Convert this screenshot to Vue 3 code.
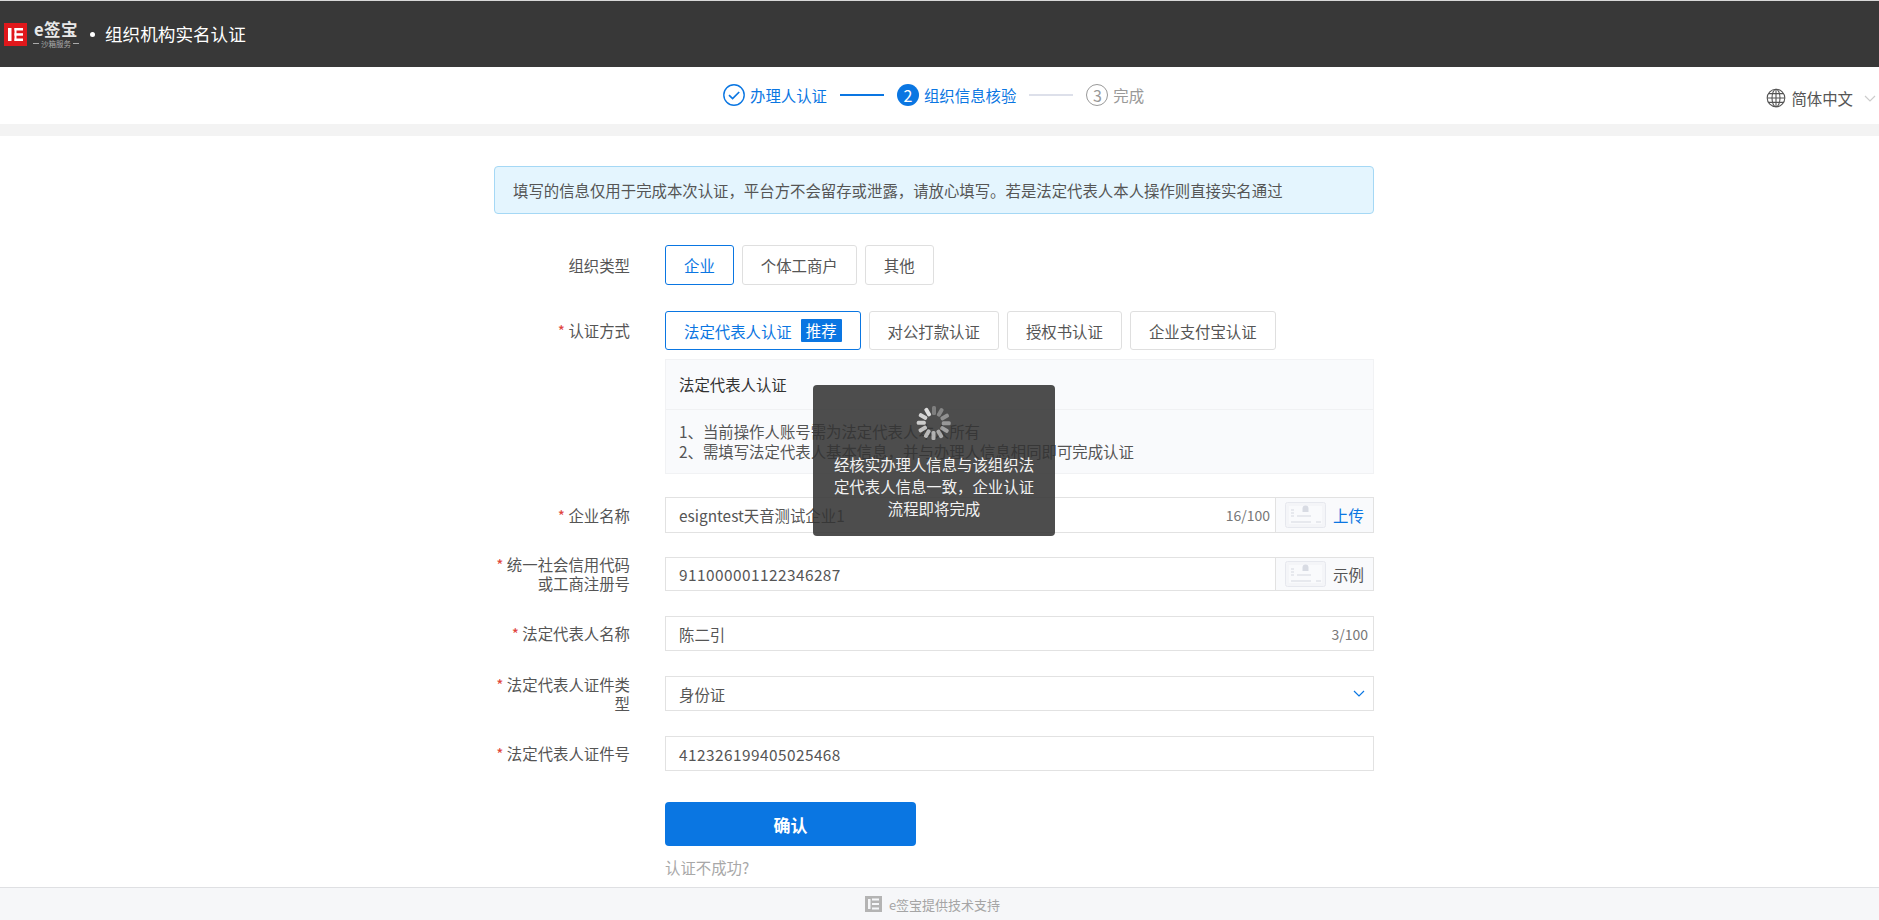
<script setup>
const orgTypes = [
  { label: '企业', active: true },
  { label: '个体工商户' },
  { label: '其他' },
]
const methods = [
  { label: '对公打款认证' },
  { label: '授权书认证' },
  { label: '企业支付宝认证' },
]
const spokes = Array.from({ length: 12 }, (_, i) => i)
</script>

<template>
  <div class="page">
    <header class="top">
      <div class="logo">
        <svg class="logo-mark" viewBox="0 0 23 23" width="23" height="23">
          <rect width="23" height="23" fill="#e0181c" />
          <rect x="4" y="5" width="3.5" height="13" fill="#fff" />
          <rect x="10.5" y="5" width="2" height="13" fill="#fff" />
          <rect x="10.5" y="5" width="8.5" height="2.5" fill="#fff" />
          <rect x="10.5" y="10.2" width="8.5" height="2.5" fill="#fff" />
          <rect x="10.5" y="15.5" width="8.5" height="2.5" fill="#fff" />
        </svg>
        <div class="logo-text">
          <div class="logo-name">e签宝</div>
          <div class="logo-sub"><i></i><span>沙箱服务</span><i></i></div>
        </div>
      </div>
      <span class="dot"></span>
      <span class="title">组织机构实名认证</span>
    </header>

    <div class="steps-bar">
      <div class="steps">
        <span class="step done">
          <svg viewBox="0 0 22 22" width="22" height="22" fill="none" stroke="#0a76e2">
            <circle cx="11" cy="11" r="10.2" stroke-width="1.4" />
            <path d="M6 11.2l3.6 3.4 6.6-6.6" stroke-width="1.7" />
          </svg>
          办理人认证
        </span>
        <span class="line on"></span>
        <span class="step cur"><b class="num">2</b>组织信息核验</span>
        <span class="line"></span>
        <span class="step todo"><b class="num">3</b>完成</span>
      </div>
      <div class="lang">
        <svg viewBox="0 0 20 20" width="20" height="20" fill="none" stroke="#555" stroke-width="1.1">
          <circle cx="10" cy="10" r="8.8" />
          <ellipse cx="10" cy="10" rx="4" ry="8.8" />
          <path d="M10 1.2v17.6M1.2 10h17.6M2.4 5.6h15.2M2.4 14.4h15.2" />
        </svg>
        <span>简体中文</span>
        <svg class="chev" viewBox="0 0 12 7" width="12" height="7" fill="none" stroke="#ccc" stroke-width="1.2">
          <path d="M1 1l5 5 5-5" />
        </svg>
      </div>
    </div>
    <div class="band"></div>

    <main class="content">
      <div class="alert">填写的信息仅用于完成本次认证，平台方不会留存或泄露，请放心填写。若是法定代表人本人操作则直接实名通过</div>

      <div class="row r-type">
        <label class="lbl">组织类型</label>
        <div class="opts">
          <span v-for="o in orgTypes" :key="o.label" class="opt" :class="{ active: o.active }">{{ o.label }}</span>
        </div>
      </div>

      <div class="row r-method">
        <label class="lbl"><em>*</em> 认证方式</label>
        <div class="opts">
          <span class="opt active">法定代表人认证<b class="tag">推荐</b></span>
          <span v-for="m in methods" :key="m.label" class="opt">{{ m.label }}</span>
        </div>
      </div>

      <div class="info">
        <div class="info-h">法定代表人认证</div>
        <div class="info-b">
          <div>1、当前操作人账号需为法定代表人本人所有</div>
          <div>2、需填写法定代表人基本信息，并与办理人信息相同即可完成认证</div>
        </div>
      </div>

      <div class="row r-name">
        <label class="lbl"><em>*</em> 企业名称</label>
        <div class="field">
          <span class="val">esigntest天音测试企业1</span>
          <span class="count">16/100</span>
          <div class="addon">
            <svg class="card" viewBox="0 0 41 26" width="41" height="26" fill="none">
              <rect x=".5" y=".5" width="40" height="25" rx="2" fill="#f4f5f8" stroke="#e6e8ee" />
              <rect x="4" y="4" width="33" height="18" fill="#f9fafc" />
              <path d="M17.5 10v-3.5a3 3 0 0 1 6 0V10z" fill="#d8dbe3" />
              <path d="M6 8h3M6 11h3M6 14h3M12 14h14M6 20h20M31 20h5" stroke="#d5d8e0" />
            </svg>
            <span class="link">上传</span>
          </div>
        </div>
      </div>

      <div class="row r-code">
        <label class="lbl two"><span><em>*</em> 统一社会信用代码</span><span>或工商注册号</span></label>
        <div class="field">
          <span class="val digits">911000001122346287</span>
          <div class="addon">
            <svg class="card" viewBox="0 0 41 26" width="41" height="26" fill="none">
              <rect x=".5" y=".5" width="40" height="25" rx="2" fill="#f4f5f8" stroke="#e6e8ee" />
              <rect x="4" y="4" width="33" height="18" fill="#f9fafc" />
              <path d="M17.5 10v-3.5a3 3 0 0 1 6 0V10z" fill="#d8dbe3" />
              <path d="M6 8h3M6 11h3M6 14h3M12 14h14M6 20h20M31 20h5" stroke="#d5d8e0" />
            </svg>
            <span>示例</span>
          </div>
        </div>
      </div>

      <div class="row r-rep">
        <label class="lbl"><em>*</em> 法定代表人名称</label>
        <div class="field"><span class="val">陈二引</span><span class="count">3/100</span></div>
      </div>

      <div class="row r-idtype">
        <label class="lbl two"><span><em>*</em> 法定代表人证件类</span><span>型</span></label>
        <div class="field">
          <span class="val">身份证</span>
          <svg class="sel" viewBox="0 0 12 7" width="12" height="7" fill="none" stroke="#0a76e2" stroke-width="1.2">
            <path d="M1 1l5 5 5-5" />
          </svg>
        </div>
      </div>

      <div class="row r-id">
        <label class="lbl"><em>*</em> 法定代表人证件号</label>
        <div class="field"><span class="val digits">412326199405025468</span></div>
      </div>

      <div class="actions">
        <button class="submit" type="button">确认</button>
        <div class="fail">认证不成功?</div>
      </div>
    </main>

    <footer class="foot">
      <svg viewBox="0 0 17 16" width="17" height="16">
        <rect width="17" height="16" fill="#b4b4b4" />
        <rect x="3" y="3" width="2.5" height="10" fill="#f6f7f9" />
        <path d="M7 3.5h7M7 8h7M7 12.5h7" stroke="#f6f7f9" stroke-width="1.8" />
      </svg>
      <span>e签宝提供技术支持</span>
    </footer>

    <div class="toast">
      <div class="spin">
        <i v-for="s in spokes" :key="s" :style="{ transform: `rotate(${s * 30}deg)`, opacity: 0.35 + (s / 11) * 0.65 }"></i>
      </div>
      <p>经核实办理人信息与该组织法定代表人信息一致，企业认证流程即将完成</p>
    </div>
  </div>
</template>

<style scoped>
.page {
  position: relative;
  width: 1879px;
  height: 920px;
  overflow: hidden;
  background: #fff;
  color: #555;
  font-family: "Noto Sans CJK SC", "Noto Sans", sans-serif;
  font-size: 15.4px;
}
.top {
  height: 66px;
  border-top: 1px solid #d8d8d8;
  background: #383838;
  display: flex;
  align-items: center;
  padding-left: 4px;
  color: #fff;
  box-sizing: content-box;
}
.logo { display: flex; align-items: center; gap: 6px; }
.logo-mark { display: block; }
.logo-text { width: 46px; color: #e8e8e8; }
.logo-name { font-size: 16.5px; line-height: 16px; font-weight: 700; letter-spacing: .4px; text-align: center; white-space: nowrap; }
.logo-sub { display: flex; align-items: center; gap: 2px; margin-top: 3px; font-size: 7.5px; line-height: 8px; color: #aaa; justify-content: space-between; white-space: nowrap; }
.logo-sub i { flex: 1; height: 1px; background: #aaa; }
.dot { width: 5px; height: 5px; border-radius: 50%; background: #fff; margin: 0 10px 0 11px; }
.title { font-size: 17.6px; line-height: 24px; }

.steps-bar { position: relative; height: 57px; }
.steps { display: flex; align-items: center; height: 100%; padding: 0 0 2px 723px; box-sizing: border-box; }
.step { display: flex; align-items: center; gap: 5px; white-space: nowrap; color: #0a76e2; }
.step svg { display: block; }
.line { width: 44px; height: 2px; background: #dde0ea; margin: 0 13px; }
.line.on { background: #0a76e2; }
.num { width: 22px; height: 22px; border-radius: 50%; display: flex; align-items: center; justify-content: center; font-weight: 400; font-size: 16px; box-sizing: border-box; }
.cur .num { background: #0a76e2; color: #fff; }
.todo { color: #999; }
.todo .num { border: 1px solid #999; }
.lang { position: absolute; right: 3px; top: 20px; display: flex; align-items: center; gap: 5px; color: #555; }
.chev { margin-left: 6px; }
.band { height: 12px; background: #f3f3f3; }

.content { width: 880px; margin-left: 494px; padding-top: 30px; }
.alert {
  height: 48px;
  box-sizing: border-box;
  border: 1px solid #a5d8f5;
  border-radius: 4px;
  background: #e4f5fe;
  padding-left: 18px;
  line-height: 46px;
}
.row { display: flex; align-items: center; }
.lbl { width: 136px; margin-right: 35px; flex: none; text-align: right; white-space: nowrap; line-height: 19px; }
.lbl em { font-style: normal; color: #e0443a; }
.two { display: flex; flex-direction: column; align-items: flex-end; }
.opts { display: flex; gap: 8px; }
.opt {
  display: flex;
  align-items: center;
  box-sizing: border-box;
  padding: 0 18px;
  border: 1px solid #dfdfdf;
  border-radius: 3px;
  white-space: nowrap;
}
.opt.active { border-color: #0a76e2; color: #0a76e2; }
.r-type { margin-top: 31px; }
.r-type .opt { height: 40px; }
.r-method { margin-top: 26px; }
.r-method .opt { height: 39px; }
.tag { margin-left: 9px; padding: 0 5px; height: 23px; line-height: 23px; background: #0a76e2; color: #fff; font-weight: 400; border-radius: 1px; }
.info { margin: 9px 0 0 171px; height: 115px; box-sizing: border-box; border: 1px solid #f1f2f4; background: #f9fafc; }
.info-h { height: 49px; line-height: 48px; padding-left: 13px; color: #333; border-bottom: 1px solid #f0f1f3; }
.info-b { padding: 11px 13px; line-height: 20px; }
.field {
  flex: 1;
  display: flex;
  align-items: center;
  height: 100%;
  box-sizing: border-box;
  border: 1px solid #e2e2e2;
  padding-left: 13px;
}
.val { flex: 1; color: #555; }
.digits { letter-spacing: .45px; }
.count { font-size: 14px; color: #777; padding-right: 5px; }
.addon {
  display: flex;
  align-items: center;
  align-self: stretch;
  gap: 7px;
  width: 98px;
  padding-left: 9px;
  box-sizing: border-box;
  border-left: 1px solid #e2e2e2;
  background: #f9fafc;
}
.card { display: block; }
.link { color: #0a76e2; }
.sel { margin-right: 8px; }
.r-name { margin-top: 23px; height: 36px; }
.r-code { margin-top: 24px; height: 34px; }
.r-rep { margin-top: 25px; height: 35px; }
.r-idtype { margin-top: 25px; height: 35px; }
.r-id { margin-top: 25px; height: 35px; }
.actions { margin: 31px 0 0 171px; }
.submit {
  display: block;
  width: 251px;
  height: 44px;
  border: 0;
  border-radius: 4px;
  background: #0a76e2;
  color: #fff;
  font: 700 17px "Noto Sans CJK SC", sans-serif;
}
.fail { margin-top: 10px; color: #a8a8a8; line-height: 22px; }
.foot {
  position: absolute;
  left: 0;
  right: 0;
  bottom: 0;
  height: 33px;
  box-sizing: border-box;
  border-top: 1px solid #dfe0e3;
  background: #f6f7f9;
  display: flex;
  align-items: center;
  justify-content: center;
  gap: 7px;
  padding-right: 14px;
  color: #a5a5a5;
  font-size: 13px;
}
.toast {
  position: absolute;
  left: 813px;
  top: 385px;
  width: 242px;
  height: 151px;
  box-sizing: border-box;
  border-radius: 4px;
  background: rgba(50, 50, 50, .87);
  color: #f2f2f2;
  padding-top: 21px;
  text-align: center;
}
.spin { position: relative; width: 34px; height: 34px; margin: 0 auto; }
.spin i {
  position: absolute;
  left: 15.25px;
  top: 0;
  width: 3.5px;
  height: 9px;
  border-radius: 1.5px;
  background: #ddd;
  transform-origin: 1.75px 17px;
}
.toast p { margin: 13px 18px 0; line-height: 22px; }
</style>

<style>
html, body { margin: 0; background: #fff; }
</style>
